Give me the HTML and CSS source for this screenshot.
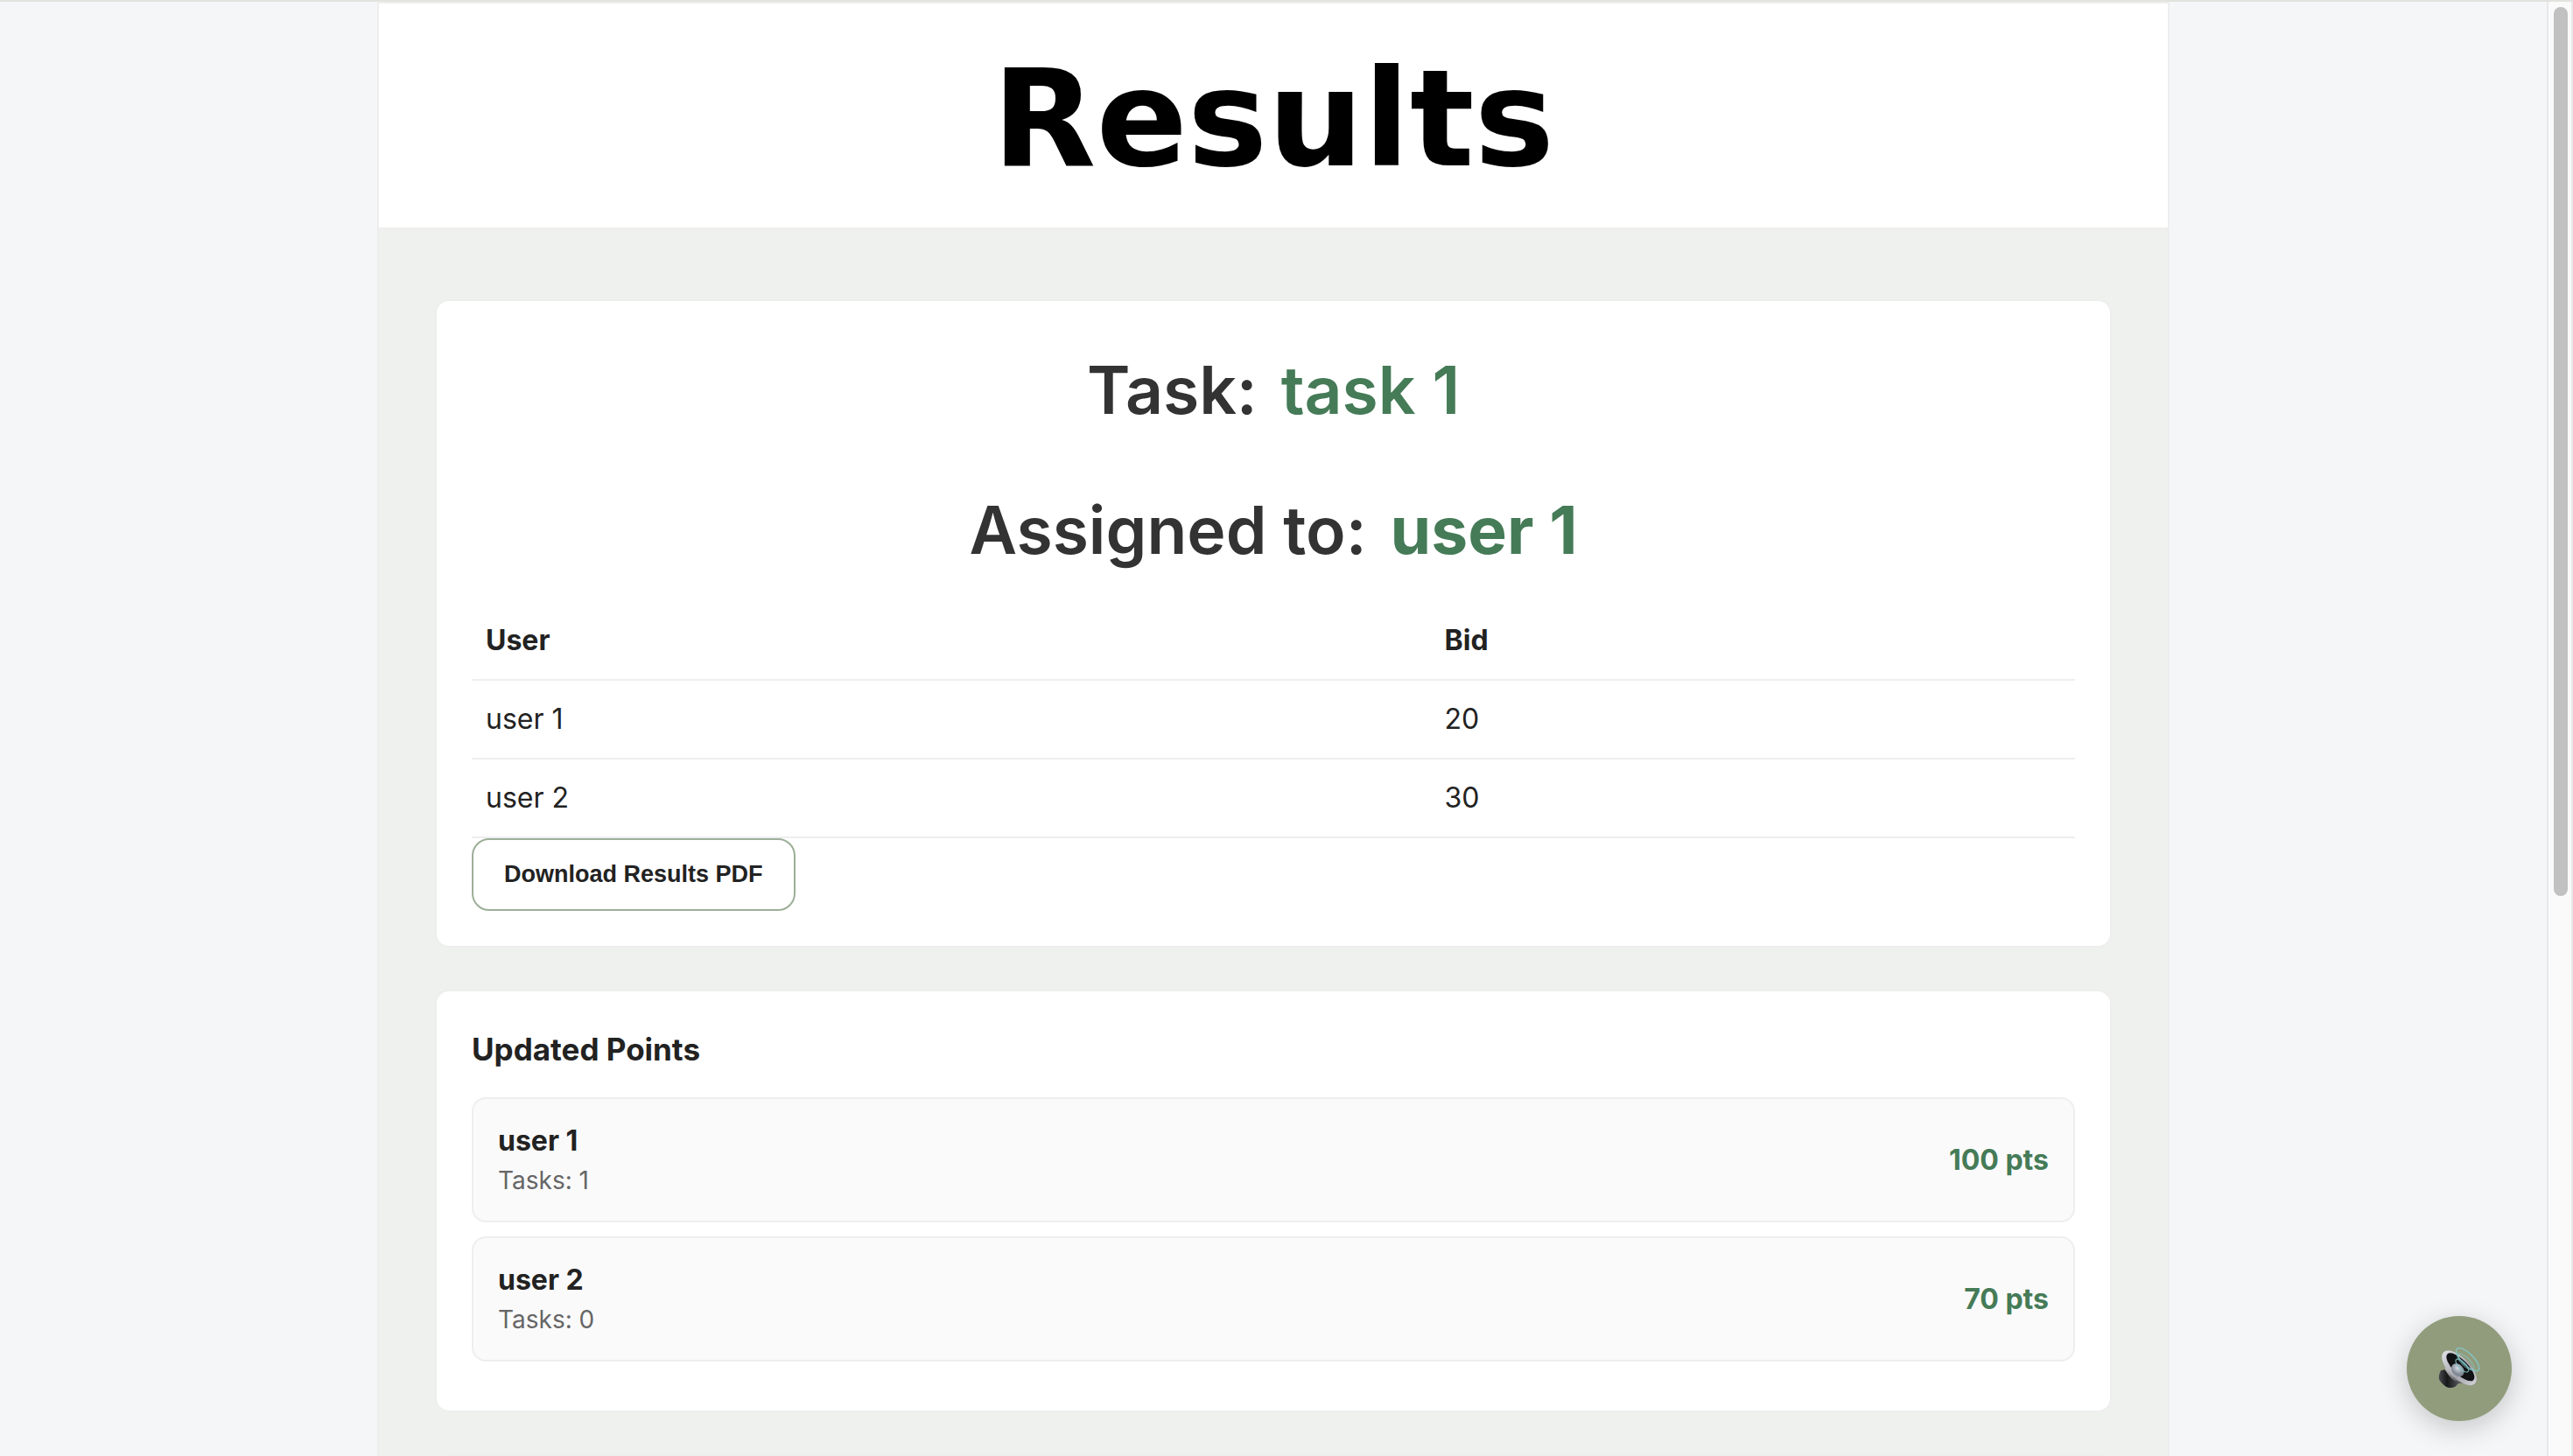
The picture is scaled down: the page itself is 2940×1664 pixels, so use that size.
FILE: index.html
```html
<!DOCTYPE html>
<html lang="en">
<head>
<meta charset="utf-8">
<meta name="viewport" content="width=device-width, initial-scale=1">
<title>Results</title>
<link rel="stylesheet" href="styles.css">
</head>
<body>
<div class="viewport">
  <div class="page">
    <main class="column">
      <header class="banner"><h1 class="banner-title">Results</h1></header>
      <div class="content">
        <section class="card">
          <div class="summary">
            <h2 class="summary-line">Task: <span class="accent">task 1</span></h2>
            <h2 class="summary-line">Assigned to: <strong class="accent">user 1</strong></h2>
          </div>
          <table class="bids">
            <thead><tr><th scope="col">User</th><th scope="col">Bid</th></tr></thead>
            <tbody>
              <tr><td>user 1</td><td>20</td></tr>
              <tr><td>user 2</td><td>30</td></tr>
            </tbody>
          </table>
          <button class="download" type="button">Download Results PDF</button>
        </section>
        <section class="card">
          <h3 class="card-title">Updated Points</h3>
          <ul class="points">
            <li class="point">
              <div><div class="name">user 1</div><div class="tasks">Tasks: 1</div></div>
              <div class="score">100 pts</div>
            </li>
            <li class="point">
              <div><div class="name">user 2</div><div class="tasks">Tasks: 0</div></div>
              <div class="score">70 pts</div>
            </li>
          </ul>
        </section>
        <section class="card"></section>
      </div>
    </main>
  </div>
  <div class="rail" aria-hidden="true"><div class="thumb"></div></div>
  <button class="sound" type="button" aria-label="Toggle sound">
    <svg viewBox="0 0 144 144" width="48" height="48" aria-hidden="true">
      <defs>
        <linearGradient id="rim" x1="0" y1="0" x2="1" y2="0"><stop offset="0" stop-color="#dcdde4"/><stop offset=".6" stop-color="#a3a3ab"/><stop offset="1" stop-color="#cfcdd4"/></linearGradient>
        <linearGradient id="magnet" x1="0" y1="0" x2="1" y2="0"><stop offset="0" stop-color="#4a4b4e"/><stop offset=".4" stop-color="#17181a"/><stop offset="1" stop-color="#55565a"/></linearGradient>
        <linearGradient id="neck" x1="0" y1="0" x2="1" y2="1"><stop offset="0" stop-color="#cfcfd2"/><stop offset=".5" stop-color="#77777b"/><stop offset="1" stop-color="#3a3a3d"/></linearGradient>
        <radialGradient id="dome" cx=".4" cy=".4"><stop offset="0" stop-color="#d3dae2"/><stop offset="1" stop-color="#7d8791"/></radialGradient>
      </defs>
      <path d="M24 64Q26 92 20 104L66 126Q78 117 108 129Z" fill="url(#neck)"/>
      <path d="M9 79Q0 96 3 110Q18 133 37 138Q56 140 63 130L72 118Q48 119 23 76Z" fill="url(#magnet)"/>
      <ellipse cx="72" cy="70" rx="76" ry="36" transform="rotate(45 72 70)" fill="url(#rim)"/>
      <ellipse cx="76" cy="67" rx="63" ry="25" transform="rotate(45 76 67)" fill="#111214"/>
      <ellipse cx="67" cy="77" rx="25" ry="19" transform="rotate(45 67 77)" fill="url(#dome)"/>
      <g fill="none" stroke="#83c5c6" stroke-width="4">
        <ellipse cx="101" cy="41" rx="52" ry="20" transform="rotate(45 101 41)"/>
        <ellipse cx="94" cy="49" rx="38" ry="14" transform="rotate(45 94 49)" opacity=".6"/>
        <ellipse cx="82" cy="62" rx="29" ry="12" transform="rotate(45 82 62)" opacity=".8"/>
      </g>
    </svg>
  </button>
</div>
</body>
</html>
```
FILE: styles.css
```css
* { box-sizing: border-box; }
body {
  margin: 0;
  background: #f4f6f8;
  color: #222;
  font: 32px/48px Inter, "Liberation Sans", sans-serif;
}
h1, h2, h3, ul { margin: 0; padding: 0; }
.viewport {
  display: flex;
  height: 100vh;
  overflow: hidden;
  border-top: 2px solid #e2e3df;
}
.page { flex: 1; min-width: 0; }
.column {
  max-width: 2048px;
  margin: 0 auto;
  border: 2px solid #eee;
  background: #eff1ee;
}
.banner {
  padding: 44px 32px 36px;
  border-bottom: 2px solid #eee;
  background: #fff;
  text-align: center;
}
.banner-title {
  color: #000;
  font: bold 154px/176px "DejaVu Sans", sans-serif;
}
.content {
  display: flex;
  flex-direction: column;
  gap: 48px;
  padding: 80px 64px;
}
.card {
  padding: 40px;
  border: 2px solid #eee;
  border-radius: 16px;
  background: #fff;
}
.summary {
  display: flex;
  flex-direction: column;
  gap: 64px;
  padding: 14px 0 34px;
}
.summary-line {
  color: #333;
  font-size: 75px;
  font-weight: 600;
  line-height: 96px;
  text-align: center;
}
.accent { margin-left: 8px; color: #457b57; }
strong.accent { font-weight: 700; }
.bids {
  width: 100%;
  border-collapse: separate;
  border-spacing: 0;
}
.bids th, .bids td {
  padding: 20px 16px;
  border-bottom: 2px solid #eee;
  text-align: left;
}
.bids th:first-child { width: 59.8%; }
.bids th { font-weight: 700; }
.download {
  display: block;
  padding: 24px 35px;
  border: 2px solid #9caf98;
  border-radius: 20px;
  background: #fff;
  color: #222;
  font: bold 27px/31px "Liberation Sans", Arial, sans-serif;
}
.card-title {
  margin-bottom: 28px;
  font-size: 35px;
  font-weight: 700;
  line-height: 53px;
}
.points { list-style: none; }
.point {
  display: flex;
  align-items: center;
  justify-content: space-between;
  margin-bottom: 16px;
  padding: 24px 28px;
  border: 2px solid #eee;
  border-radius: 16px;
  background: #fafafa;
}
.name { font-weight: 700; }
.tasks { color: #666; font-size: 28px; line-height: 43px; }
.score { color: #457b57; font-weight: 700; }
.rail {
  width: 30px;
  padding: 6px 4px 6px 6px;
  border: solid #e8e8e8;
  border-width: 0 2px;
  background: #fafafa;
}
.thumb { height: 61.6%; border-radius: 8px; background: #c1c1c1; }
.sound {
  position: fixed;
  right: 70px;
  bottom: 40px;
  display: flex;
  align-items: center;
  justify-content: center;
  width: 120px;
  height: 120px;
  padding: 0;
  border: 0;
  border-radius: 50%;
  background: #919c7c;
  box-shadow: 0 8px 32px rgba(0, 0, 0, 0.2);
}
```
